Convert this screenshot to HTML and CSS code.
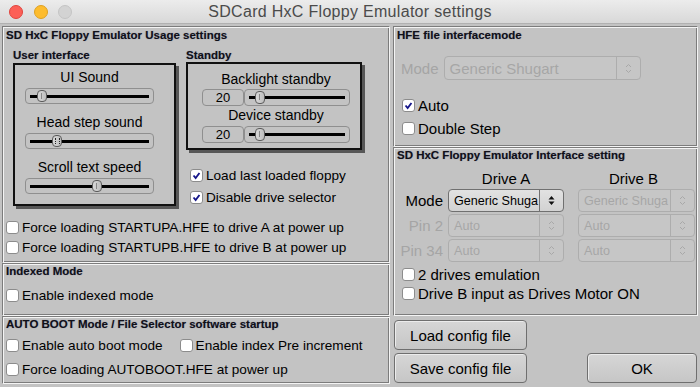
FILE: index.html
```html
<!DOCTYPE html>
<html>
    <head>
        <meta charset="utf-8">
        <title>SDCard HxC Floppy Emulator settings</title>
        <link rel="stylesheet" href="styles.css">
    </head>
    <body>
        <div class="titlebar">
            <div class="lights">
                <span class="light red"></span>
                <span class="light yellow"></span>
                <span class="light grey"></span>
            </div>
            <div class="title">SDCard HxC Floppy Emulator settings</div>
        </div>

        <div class="content">
            <div class="col left">
                <section class="panel usage">
                    <h2>SD HxC Floppy Emulator Usage settings</h2>
                    <div class="usage-top">
                        <div class="group">
                            <div class="group-label">User interface</div>
                            <div class="group-box ui-box">
                                <div class="slabel">UI Sound</div>
                                <div class="slider wide"><span class="track"></span><span class="thumb" style="left:11px"></span></div>
                                <div class="slabel gap">Head step sound</div>
                                <div class="slider wide"><span class="track"></span><span class="thumb grip" style="left:26px"></span></div>
                                <div class="slabel gap">Scroll text speed</div>
                                <div class="slider wide"><span class="track"></span><span class="thumb" style="left:66px"></span></div>
                            </div>
                        </div>
                        <div class="usage-right">
                            <div class="group">
                                <div class="group-label">Standby</div>
                                <div class="group-box standby-box">
                                    <div class="slabel first">Backlight standby</div>
                                    <div class="value-row">
                                        <div class="value">20</div>
                                        <div class="slider narrow"><span class="track"></span><span class="thumb" style="left:10px"></span></div>
                                    </div>
                                    <div class="slabel">Device standby</div>
                                    <div class="value-row second">
                                        <div class="value">20</div>
                                        <div class="slider narrow"><span class="track"></span><span class="thumb" style="left:10px"></span></div>
                                    </div>
                                </div>
                            </div>
                            <div class="checks-right">
                                <label class="check"><span class="box"><svg width="13" height="13" viewBox="0 0 13 13"><path d="M3 6.5 L5.5 9.5 L10 3.5" fill="none" stroke="#15158a" stroke-width="2.2"/></svg></span>Load last loaded floppy</label>
                                <label class="check"><span class="box"><svg width="13" height="13" viewBox="0 0 13 13"><path d="M3 6.5 L5.5 9.5 L10 3.5" fill="none" stroke="#15158a" stroke-width="2.2"/></svg></span>Disable drive selector</label>
                            </div>
                        </div>
                    </div>
                    <div class="force">
                        <label class="check"><span class="box"></span>Force loading STARTUPA.HFE to drive A at power up</label>
                        <label class="check"><span class="box"></span>Force loading STARTUPB.HFE to drive B at power up</label>
                    </div>
                </section>

                <section class="panel indexed">
                    <h2>Indexed Mode</h2>
                    <label class="check row24 indexed-row"><span class="box"></span>Enable indexed mode</label>
                </section>

                <section class="panel autoboot">
                    <h2>AUTO BOOT Mode / File Selector software startup</h2>
                    <div class="auto-rows">
                        <div class="auto-line">
                            <label class="check row24"><span class="box"></span>Enable auto boot mode</label>
                            <label class="check row24 pre"><span class="box"></span>Enable index Pre increment</label>
                        </div>
                        <label class="check row24"><span class="box"></span>Force loading AUTOBOOT.HFE at power up</label>
                    </div>
                </section>
            </div>

            <div class="col right">
                <section class="panel hfe">
                    <h2>HFE file interfacemode</h2>
                    <div class="mode-row">
                        <span class="field-label off">Mode</span>
                        <div class="choice off big">
                            <span class="choice-text">Generic Shugart</span>
                            <span class="arrows"><svg width="7" height="11" viewBox="0 0 7 11"><path d="M1 4 L3.5 1.5 L6 4 M1 7 L3.5 9.5 L6 7" fill="none" stroke="#a8a8a8" stroke-width="1"/></svg></span>
                        </div>
                    </div>
                    <div class="hfe-checks">
                        <label class="check"><span class="box"><svg width="13" height="13" viewBox="0 0 13 13"><path d="M3 6.5 L5.5 9.5 L10 3.5" fill="none" stroke="#15158a" stroke-width="2.2"/></svg></span>Auto</label>
                        <label class="check"><span class="box"></span>Double Step</label>
                    </div>
                </section>

                <section class="panel iface">
                    <h2>SD HxC Floppy Emulator Interface setting</h2>
                    <div class="drives">
                        <span></span>
                        <span class="drive-title">Drive A</span>
                        <span class="drive-title">Drive B</span>

                        <span class="field-label right">Mode</span>
                        <div class="choice">
                            <span class="choice-text">Generic Shuga</span>
                            <span class="arrows"><svg width="7" height="11" viewBox="0 0 7 11"><path d="M0.5 4.5 L3.5 1 L6.5 4.5 Z M0.5 6.5 L3.5 10 L6.5 6.5 Z" fill="#111"/></svg></span>
                        </div>
                        <div class="choice off">
                            <span class="choice-text">Generic Shuga</span>
                            <span class="arrows"><svg width="7" height="11" viewBox="0 0 7 11"><path d="M1 4 L3.5 1.5 L6 4 M1 7 L3.5 9.5 L6 7" fill="none" stroke="#a8a8a8" stroke-width="1"/></svg></span>
                        </div>

                        <span class="field-label right off">Pin 2</span>
                        <div class="choice off">
                            <span class="choice-text">Auto</span>
                            <span class="arrows"><svg width="7" height="11" viewBox="0 0 7 11"><path d="M1 4 L3.5 1.5 L6 4 M1 7 L3.5 9.5 L6 7" fill="none" stroke="#a8a8a8" stroke-width="1"/></svg></span>
                        </div>
                        <div class="choice off">
                            <span class="choice-text">Auto</span>
                            <span class="arrows"><svg width="7" height="11" viewBox="0 0 7 11"><path d="M1 4 L3.5 1.5 L6 4 M1 7 L3.5 9.5 L6 7" fill="none" stroke="#a8a8a8" stroke-width="1"/></svg></span>
                        </div>

                        <span class="field-label right off">Pin 34</span>
                        <div class="choice off">
                            <span class="choice-text">Auto</span>
                            <span class="arrows"><svg width="7" height="11" viewBox="0 0 7 11"><path d="M1 4 L3.5 1.5 L6 4 M1 7 L3.5 9.5 L6 7" fill="none" stroke="#a8a8a8" stroke-width="1"/></svg></span>
                        </div>
                        <div class="choice off">
                            <span class="choice-text">Auto</span>
                            <span class="arrows"><svg width="7" height="11" viewBox="0 0 7 11"><path d="M1 4 L3.5 1.5 L6 4 M1 7 L3.5 9.5 L6 7" fill="none" stroke="#a8a8a8" stroke-width="1"/></svg></span>
                        </div>
                    </div>
                    <div class="iface-checks">
                        <label class="check row19"><span class="box"></span>2 drives emulation</label>
                        <label class="check row19"><span class="box"></span>Drive B input as Drives Motor ON</label>
                    </div>
                </section>

                <div class="buttons">
                    <button class="button">Load config file</button>
                    <span></span>
                    <span></span>
                    <button class="button">Save config file</button>
                    <span></span>
                    <button class="button">OK</button>
                </div>
            </div>
        </div>
    </body>
</html>
```

FILE: styles.css
```css
body{
    margin:0;
    width:700px;
    height:387px;
    overflow:hidden;
    background-color:#c3c3c3;
    font-family:"Liberation Sans", Arial, sans-serif;
    font-size:14px;
    color:#000;
}

/* title bar */
.titlebar{
    position:relative;
    height:24px;
    box-sizing:border-box;
    border-bottom:1px solid #b1b1b1;
    background:linear-gradient(#ececec, #d8d8d8);
    display:flex;
    align-items:center;
    justify-content:center;
}
.lights{
    position:absolute;
    left:9px;
    top:5px;
    display:flex;
    gap:10.5px;
}
.light{
    width:14px;
    height:14px;
    border-radius:50%;
    box-sizing:border-box;
}
.red{ background:#fc5f57; border:1px solid #e0443e; }
.yellow{ background:#fdbc2e; border:1px solid #dea123; }
.grey{ background:#d3d3d3; border:1px solid #c4c4c4; }
.title{
    font-size:16px;
    letter-spacing:0.3px;
    color:#4b4b4b;
    padding-top:1px;
}

/* main layout */
.content{
    display:grid;
    grid-template-columns:388px 305px;
    column-gap:3px;
    padding:2px 2px 0 2px;
}
.col{
    display:flex;
    flex-direction:column;
}
.col.left{ font-size:13.6px; }
.col.right{ font-size:15px; }
.panel{
    box-sizing:border-box;
    border:1px solid;
    border-color:#7c7c7c #f4f4f4 #f4f4f4 #7c7c7c;
    box-shadow:inset 1px 1px 0 #f4f4f4, inset -1px -1px 0 #7c7c7c;
    padding:1px 3px 0 3px;
}
.panel h2{
    margin:0;
    font-size:11.5px;
    line-height:13px;
    font-weight:bold;
    color:#101018;
    text-shadow:0 0 1px rgba(40,40,90,0.45);
}
.usage{ height:237px; padding-top:2px; }
.indexed{ height:53px; }
.autoboot{ height:68px; }
.hfe{ height:121px; padding-top:2px; }
.iface{ height:169px; }

/* checkboxes */
.check{
    display:flex;
    align-items:center;
    gap:3px;
    height:20px;
    white-space:nowrap;
}
.row24{ height:24px; }
.row19{ height:19px; }
.box{
    width:13px;
    height:13px;
    box-sizing:border-box;
    border:1px solid #8c8c8c;
    border-radius:3px;
    background:#fff;
    display:flex;
    align-items:center;
    justify-content:center;
    flex:none;
}
.box svg{ display:block; }

/* usage settings */
.usage-top{
    display:flex;
    gap:10px;
    margin-top:6px;
    margin-left:7px;
}
.group-label{
    font-size:11.5px;
    line-height:14px;
    font-weight:bold;
    color:#101018;
    text-shadow:0 0 1px rgba(40,40,90,0.45);
}
.group-box{
    box-sizing:border-box;
    border:2px solid #111;
    box-shadow:3px 3px 0 #575757;
    font-size:14px;
}
.ui-box{
    width:163px;
    height:143px;
    margin-top:1px;
    padding:3px 0 0 10px;
}
.standby-box{
    width:176px;
    height:88px;
    padding:6px 0 0 14px;
}
.slabel{
    height:18px;
    line-height:18px;
    text-align:center;
    width:129px;
}
.standby-box .slabel{ width:148px; }
.slabel.gap{ margin-top:9px; }
.ui-box .slider{ margin-top:2px; }

.slider{
    position:relative;
    box-sizing:border-box;
    height:16px;
    border:1px solid #8f8f8f;
    border-radius:4px;
}
.slider.wide{ width:129px; }
.slider.narrow{ width:106px; height:17px; }
.track{
    position:absolute;
    left:4px;
    right:4px;
    top:6px;
    height:3px;
    background:#000;
}
.thumb{
    position:absolute;
    top:1px;
    width:10px;
    height:12px;
    box-sizing:border-box;
    border:1px solid #5c5c5c;
    border-radius:4px;
    background:linear-gradient(90deg, #d8d8d8, #bdbdbd);
}
.slider.narrow .thumb{ height:13px; }
.thumb::after{
    content:"";
    position:absolute;
    left:3px;
    top:2px;
    width:2px;
    height:6px;
    border-left:1px solid #888;
}
.thumb.grip::after{
    left:2px;
    width:3px;
    border-left:1px dotted #222;
    border-right:1px dotted #222;
}

.value-row{
    display:flex;
    margin-top:1px;
}
.value-row.second{ margin-top:2px; }
.value{
    width:42px;
    height:17px;
    box-sizing:border-box;
    border:1px solid #8f8f8f;
    border-radius:4px;
    font-size:13px;
    line-height:15px;
    text-align:center;
}
.checks-right{
    margin-top:14px;
    margin-left:4px;
}
.checks-right .check{ height:22px; }
.force{
    margin-top:9px;
}

/* indexed & autoboot */
.indexed-row{ margin-top:5px; }
.auto-rows{ margin-top:2px; }
.auto-line{
    display:flex;
}
.pre{ margin-left:17px; }

/* hfe panel */
.mode-row{
    display:flex;
    align-items:center;
    gap:5px;
    margin-top:14px;
    margin-left:4px;
}
.field-label.off{ color:#a5a5a5; }
.field-label.right{ text-align:right; }
.choice{
    display:flex;
    align-items:center;
    box-sizing:border-box;
    height:24px;
    border:1px solid #707070;
    border-radius:4px;
    background:linear-gradient(#e2e2e2, #d2d2d2);
    font-size:12.6px;
    overflow:hidden;
}
.choice.off{
    border-color:#adadad;
    background:#c6c6c6;
    color:#a6a6a6;
}
.choice.big{
    width:197px;
    font-size:15px;
}
.choice-text{
    flex:1;
    white-space:nowrap;
    padding-left:5px;
}
.arrows{
    width:24px;
    height:100%;
    box-sizing:border-box;
    border-left:1px solid #707070;
    display:flex;
    align-items:center;
    justify-content:center;
    flex:none;
}
.off .arrows{ border-left-color:#adadad; }
.hfe-checks{
    margin-top:14px;
    margin-left:5px;
}
.hfe-checks .check{ height:23px; }

/* interface panel */
.drives{
    display:grid;
    grid-template-columns:46px 116px 117px;
    grid-template-rows:18px 23px 23px 23px;
    column-gap:5px;
    row-gap:2px;
    align-items:center;
    margin-top:7px;
}
.drives .choice{ height:23px; }
.drives .choice:nth-child(6),
.drives .choice:nth-child(9),
.drives .choice:nth-child(12){ margin-left:9px; width:117px; }
.drive-title{
    text-align:center;
}
.drives .drive-title:nth-child(3){ padding-left:12px; }
.iface-checks{
    margin-top:3px;
    margin-left:5px;
}

/* buttons */
.buttons{
    display:grid;
    grid-template-columns:133px 1fr 110px;
    grid-template-rows:30px 30px;
    row-gap:3px;
    padding:4px 1px 0 1px;
}
.button{
    font-family:"Liberation Sans", Arial, sans-serif;
    font-size:15px;
    color:#000;
    border:1px solid #6f6f6f;
    border-radius:4px;
    background:linear-gradient(#d6d6d6, #c6c6c6);
    box-shadow:inset 1px 1px 0 #ececec;
    padding:0;
}
```
